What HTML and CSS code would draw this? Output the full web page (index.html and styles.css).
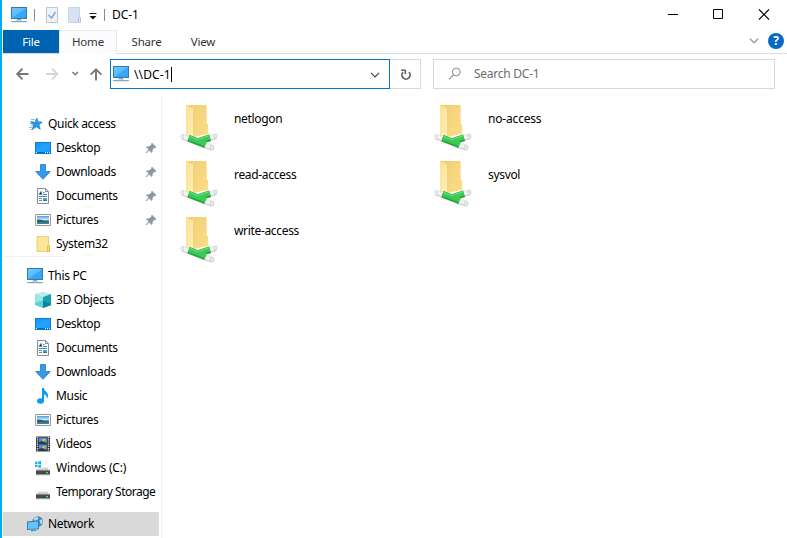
FILE: index.html
```
<!DOCTYPE html>
<html lang="en">
<head>
<meta charset="utf-8">
<title>DC-1</title>
<link rel="stylesheet" href="styles.css">
</head>
<body>
<svg class="defs" width="0" height="0" aria-hidden="true">
  <defs>
    <linearGradient id="screen" x1="0" y1="0" x2="1" y2="1"><stop offset="0" stop-color="#6fc8ff"/><stop offset=".5" stop-color="#5abaff"/><stop offset=".52" stop-color="#37a9fa"/><stop offset="1" stop-color="#2fa4f7"/></linearGradient>
    <linearGradient id="blue" x1="0" y1="0" x2="1" y2="1"><stop offset="0" stop-color="#0a93f5"/><stop offset=".5" stop-color="#22a4ff"/><stop offset="1" stop-color="#1c9bfa"/></linearGradient>
    <linearGradient id="flap" x1="0" y1="0" x2="1" y2="1"><stop offset="0" stop-color="#fbe08d"/><stop offset="1" stop-color="#ffefbc"/></linearGradient>
    <linearGradient id="back" x1="0" y1="0" x2="1" y2="1"><stop offset="0" stop-color="#f0cf72"/><stop offset="1" stop-color="#fcdd88"/></linearGradient>
    <linearGradient id="sky" x1="0" y1="0" x2="0" y2="1"><stop offset="0" stop-color="#4c9be8"/><stop offset=".5" stop-color="#d8f0fb"/><stop offset=".6" stop-color="#33605f"/><stop offset="1" stop-color="#4087b4"/></linearGradient>
    <linearGradient id="drivetop" x1="0" y1="0" x2="0" y2="1"><stop offset="0" stop-color="#ddd"/><stop offset="1" stop-color="#bbb"/></linearGradient>
  </defs>
  <symbol id="pc" viewBox="0 0 16 16"><path fill="#337ca8" d="M0 0h16v12H0z"/><path fill="url(#screen)" d="M1 1h14v10H1z"/><path fill="#8ea5b8" d="M6 12h4v1H6zM0 14h16v1H0z"/><path fill="#c6d2dc" d="M5 13h6v1H5zM1 15h14v.5H1z"/></symbol>
  <symbol id="star" viewBox="0 0 16 16"><path stroke="#7cc3f0" d="M4 3.500h4M3 5.500h4M3 7.500h4M4 9.500h4M2 11.500h4M3 13.500h3"/><path fill="#2a97e6" stroke="#1776bc" stroke-width=".7" d="M9.800 2l1.200 4 4.200.1-3.300 2.700 1.300 4.400-3.800-2.500-4 2.700 1.500-4.300-3-2.600h4.200z"/></symbol>
  <symbol id="desktop" viewBox="0 0 16 16"><path fill="#127ac9" d="M0 2h16v12H0z"/><path fill="url(#blue)" d="M1 3h14v9H1z"/><path fill="#0865ac" d="M1 12h14v1H1z"/><path fill="#fff" d="M1 12h1v1H1zM10 12h1v1h-1zM12 12h1v1h-1zM14 12h1v1h-1z"/></symbol>
  <symbol id="down" viewBox="0 0 16 16"><path fill="#3399eb" stroke="#247bc8" stroke-width=".8" d="M5.500.5h5v7h4.800L8 15.300.7 7.500h4.800z"/></symbol>
  <symbol id="doc" viewBox="0 0 16 16"><path fill="#fff" stroke="#8b8f92" d="M2.500.5h8l3 3v12h-11z"/><path fill="none" stroke="#8b8f92" d="M10.500.5v3h3"/><path stroke="#2e8cc5" d="M4 6.500l2-3 1 3M8 4.500h1.500M8 6.500h4M4 8.500h8"/><path stroke="#7d8b95" d="M4 10.500h3M4 12.500h3"/><path fill="#549bd4" d="M8 10h4v3H8z"/><path fill="#477c54" d="M8 12h4v1H8z"/></symbol>
  <symbol id="pic" viewBox="0 0 16 16"><path fill="#fff" stroke="#999" d="M.5 2.500h15v11H.5z"/><path fill="url(#sky)" d="M2 4h12v8H2z"/><path fill="#285d60" d="M2 7.500l4 .3 4 1.700H2z"/></symbol>
  <symbol id="folder" viewBox="0 0 16 16"><path fill="#ffe696" stroke="#e5bd58" stroke-width=".7" d="M2 .4h11.500V9l1 1v5.600H2z"/><path fill="#f8d97c" stroke="#d9ad42" stroke-width=".7" d="M12.500 15.500V10l1-1 1 1v5.500z"/></symbol>
  <symbol id="cube" viewBox="0 0 16 16"><path fill="#b4ecf0" d="M8 0l8 2-8 3-8-3z"/><path fill="#5fd0da" d="M0 2l8 3v11l-8-3z"/><path fill="#16a0b2" d="M16 2L8 5v11l8-3z"/><path fill="#9be6eb" d="M0 2l8 3v3L0 11z"/><path fill="#0a8598" d="M8 9l8 3v1l-8 3z"/></symbol>
  <symbol id="music" viewBox="0 0 16 16"><ellipse cx="5.500" cy="13" rx="3.500" ry="2.700" fill="#0d9bf2"/><path fill="#0d9bf2" d="M7 0h2c0 3 4 4 4 7.500 0 1.500-.5 2.500-1.200 3.500.5-3-1.300-4.500-2.800-4.800V13H7z"/></symbol>
  <symbol id="film" viewBox="0 0 16 16"><path fill="#343434" d="M1 .500h14v15H1z"/><path stroke="#e8e8e8" stroke-width="1.400" stroke-dasharray="1.200 1" d="M2.500 1v14M13.500 1v14"/><path fill="#4d8fe0" d="M4 1.500h8V8H4zM4 8.500h8V15H4z"/><path fill="#e9c22d" d="M7.500 3h3v3h-3zM7.500 10h3v3h-3z"/><path fill="#263d55" d="M4 6l3-1 5 2v1H4zM4 13l3-1 5 2v1H4z"/><path fill="#d37b24" d="M9 4.500h1.500V6H9zM9 11.500h1.500V13H9z"/></symbol>
  <symbol id="drive" viewBox="0 0 16 16"><path fill="url(#drivetop)" d="M3.500 7.500h9L15 11H1z"/><path fill="#484848" d="M1 10.500h14v4H1z"/><path fill="#8a8a8a" d="M1 14.500h14v.7H1z"/><path fill="#44f34c" d="M11 12h2v1.200h-2z"/></symbol>
  <symbol id="windrive" viewBox="0 0 16 16"><use href="#drive"/><path fill="#fff" d="M0 1h7v7.500H0z"/><path fill="#14b5ec" d="M0 2l2.500-.4V4H0zM3.300 1.500L6 1v3H3.300zM0 4.800h2.500v2.400L0 6.800zM3.300 4.800H6v3l-2.700-.4z"/></symbol>
  <symbol id="network" viewBox="0 0 16 16"><circle cx="10.700" cy="5.500" r="5.300" fill="#4686ae"/><path fill="#b4dcf0" d="M7 2l3-1.600 1.500 2-2 2-2.500.3zM12.500 4l2.500-.5.700 3-2 2z"/><path fill="#2f81b4" d="M0 5.500l12-1.200v9L0 14z"/><path fill="#64c2fd" d="M1 6.400l10-1v7L1 13z"/><path fill="#5499c4" d="M4 14l5-.5.8 1.300L4 15.500z"/></symbol>
  <symbol id="pin" viewBox="0 0 12 12"><path fill="#8a96a0" d="M7 .8l4.300 4.300-1 .8-.7-.2-2.100 2.200.1 2-1 1-2.400-2.500L1 11.500l-.6-.5 3.200-3.400L1.200 5.200l1-.9 2 .1 2.300-2.200-.3-.7z"/></symbol>
  <symbol id="share" viewBox="0 0 38 48">
    <path fill="url(#back)" d="M6 1h20.700v18l1.500 2v9L13 33z"/><path fill="url(#flap)" d="M6 1l7.500 4v24L11 33l-5-1z"/><path fill="#e9c665" d="M13.500 5v25l.6-.2V5.200z"/>
    <path stroke="#d2d5d7" stroke-width="5.600" d="M2 32.800l7 2.200M28 34.800l7.500-2.300M23.500 41.300l8 2.300"/><path stroke="#f4f5f5" stroke-width="3.600" d="M2 32.300l7 2.200M28 34.300l7.500-2.300M23.500 40.800l8 2.300"/>
    <path fill="none" stroke="#25a640" stroke-width="6.800" d="M8.500 34.300l17 6.500M17 38l13-4.300"/><path fill="none" stroke="#3dca54" stroke-width="4.800" d="M8.700 33.600l17 6.500M17 37.300l12.800-4.300"/><path fill="none" stroke="#65da77" stroke-width="1.300" d="M9.500 32.500l8.500 3 10.500-3.600"/>
    <ellipse cx="32" cy="43.600" rx="1.900" ry="2.700" fill="#e7e9ea" stroke="#c4c8ca" stroke-width=".7"/><ellipse cx="35.500" cy="32.300" rx="1.400" ry="2.500" fill="#e7e9ea" stroke="#c4c8ca" stroke-width=".7"/><ellipse cx="2.300" cy="32.800" rx="1.400" ry="2.500" fill="#eceeee" stroke="#d0d3d5" stroke-width=".7"/>
  </symbol>
</svg>
<div class="window">
  <header class="titlebar">
    <svg class="i16"><use href="#pc"/></svg>
    <span class="bar bar-first"></span>
    <svg class="props" width="12" height="16"><path d="M.5.500h11v15H.5z" fill="#edf3fb" stroke="#b8c6dc"/><path d="M2.500 8l3 3L9.500 5" fill="none" stroke="#8fa5c4" stroke-width="1.500"/></svg>
    <svg class="newfolder" width="13" height="16"><path d="M.5.500h11V10l1 1v4.500H.5z" fill="#d7e1f1" stroke="#c8d3e5"/><path d="M10.500 15v-4l1-1 1 1v4" fill="#dfe7f4" stroke="#b5c3da"/></svg>
    <svg class="custom" width="8" height="8"><path d="M.5 1.500h7" stroke="#222"/><path d="M.5 4h7L4 7.500z" fill="#111"/></svg>
    <span class="bar"></span>
    <span class="title">DC-1</span>
    <svg class="controls" width="104" height="12"><path d="M0 6.500h10" stroke="#000"/><path d="M45.500 1.500h9v9h-9z" fill="none" stroke="#000"/><path d="M91 1.500l10 10M101 1.500l-10 10" stroke="#000" stroke-width="1.100"/></svg>
  </header>
  <nav class="tabs">
    <span class="tab file">File</span><span class="tab home">Home</span><span class="tab sharetab">Share</span><span class="tab view">View</span>
    <svg class="expand" width="10" height="6"><path d="M1 .8l4 4 4-4" fill="none" stroke="#999" stroke-width="1.300"/></svg>
    <span class="help">?</span>
  </nav>
  <div class="address">
    <svg class="arrows" width="90" height="16"><path d="M2 8h11.500M7.500 2.700L2.200 8l5.300 5.300" fill="none" stroke="#777" stroke-width="1.900"/><path d="M31 8h11M37 2.700L42.300 8 37 13.300" fill="none" stroke="#d6d6d6" stroke-width="1.900"/><path d="M57.500 6l2.700 2.700L63 6" fill="none" stroke="#777" stroke-width="1.500"/><path d="M81 14.500V3.500M75.700 8.700L81 3.400l5.300 5.300" fill="none" stroke="#777" stroke-width="1.900"/></svg>
    <div class="path"><svg class="i16"><use href="#pc"/></svg><span class="pathtext">\\DC-1</span><span class="caret"></span><svg class="drop" width="10" height="6"><path d="M1 .8l4 4 4-4" fill="none" stroke="#444" stroke-width="1.200"/></svg></div>
    <div class="refresh"><svg width="12" height="12"><path d="M3 3.200A4.100 4.100 0 1 0 9 3.200" fill="none" stroke="#666" stroke-width="1.800"/><path d="M1 1.300h4.300v4" fill="none" stroke="#666" stroke-width="1.600"/></svg></div>
    <div class="search"><svg width="14" height="14"><circle cx="8.300" cy="5" r="3.900" fill="none" stroke="#888"/><path d="M5.500 7.800L1 12.300" stroke="#888" stroke-width="1.100"/></svg><span>Search DC-1</span></div>
  </div>
  <div class="body">
    <aside class="side">
      <div class="row top"><svg class="i16"><use href="#star"/></svg><span>Quick access</span></div>
      <div class="row"><svg class="i16"><use href="#desktop"/></svg><span>Desktop</span><svg class="pin"><use href="#pin"/></svg></div>
      <div class="row"><svg class="i16"><use href="#down"/></svg><span>Downloads</span><svg class="pin"><use href="#pin"/></svg></div>
      <div class="row"><svg class="i16"><use href="#doc"/></svg><span>Documents</span><svg class="pin"><use href="#pin"/></svg></div>
      <div class="row"><svg class="i16"><use href="#pic"/></svg><span>Pictures</span><svg class="pin"><use href="#pin"/></svg></div>
      <div class="row"><svg class="i16"><use href="#folder"/></svg><span>System32</span></div>
      <div class="split"></div>
      <div class="row top"><svg class="i16"><use href="#pc"/></svg><span>This PC</span></div>
      <div class="row"><svg class="i16"><use href="#cube"/></svg><span>3D Objects</span></div>
      <div class="row"><svg class="i16"><use href="#desktop"/></svg><span>Desktop</span></div>
      <div class="row"><svg class="i16"><use href="#doc"/></svg><span>Documents</span></div>
      <div class="row"><svg class="i16"><use href="#down"/></svg><span>Downloads</span></div>
      <div class="row"><svg class="i16"><use href="#music"/></svg><span>Music</span></div>
      <div class="row"><svg class="i16"><use href="#pic"/></svg><span>Pictures</span></div>
      <div class="row"><svg class="i16"><use href="#film"/></svg><span>Videos</span></div>
      <div class="row"><svg class="i16"><use href="#windrive"/></svg><span class="loose">Windows (C:)</span></div>
      <div class="row"><svg class="i16"><use href="#drive"/></svg><span class="tight">Temporary Storage</span></div>
      <div class="row top selected"><svg class="i16"><use href="#network"/></svg><span>Network</span></div>
    </aside>
    <main class="files">
      <div class="item"><svg><use href="#share"/></svg><span>netlogon</span></div>
      <div class="item"><svg><use href="#share"/></svg><span class="loose">no-access</span></div>
      <div class="item"><svg><use href="#share"/></svg><span>read-access</span></div>
      <div class="item"><svg><use href="#share"/></svg><span>sysvol</span></div>
      <div class="item"><svg><use href="#share"/></svg><span>write-access</span></div>
    </main>
  </div>
</div>
</body>
</html>
```
FILE: styles.css
```
* { box-sizing: border-box; }
body { margin: 0; background: #fff; color: #000; font: 12px/16px "Noto Sans", "Open Sans", sans-serif; letter-spacing: -0.33px; overflow: hidden; }
svg { display: block; flex: none; }
.defs { position: absolute; }
.i16 { width: 16px; height: 16px; }
.window { width: 787px; height: 538px; border-left: 2px solid #00adef; display: flex; flex-direction: column; overflow: hidden; }
.titlebar { height: 30px; display: flex; align-items: center; padding-left: 9px; }
.bar { width: 1px; height: 12px; background: #8c8c8c; }
.bar-first { margin-left: 7px; }
.props { margin-left: 11px; }
.newfolder { margin-left: 10px; }
.custom { margin: 2px 7px 0 8px; }
.title { margin-left: 7px; letter-spacing: -0.1px; }
.controls { margin: -2px 15px 0 auto; }
.tabs { height: 24px; display: flex; border-bottom: 1px solid #dadbdc; padding-left: 1px; }
.tab { height: 23px; line-height: 24px; text-align: center; color: #333; font-size: 11.5px; letter-spacing: -0.2px; }
.tab.file { width: 56px; background: #0063b1; color: #fff; }
.home { width: 58px; height: 24px; background: #fcfcfe; border: 1px solid #e9e9ec; border-bottom: 0; line-height: 22px; }
.sharetab { width: 59px; }
.view { width: 54px; }
.expand { margin: 8px 9px 0 auto; }
.help { width: 16px; height: 16px; margin: 3px 3px 0 0; border-radius: 50%; background: #0869c4; color: #fff; font-weight: 700; text-align: center; line-height: 16px; }
.address { height: 42px; padding: 5px 12px 7px 0; display: flex; }
.arrows { width: 90px; margin: 7px 5px 0 13px; }
.path { width: 280px; height: 30px; border: 1px solid #0078d7; display: flex; align-items: center; padding-left: 2px; }
.pathtext { margin-left: 5px; padding-top: 1px; letter-spacing: 0.1px; }
.caret { width: 1px; height: 15px; background: #000; }
.drop { margin: 2px 9px 0 auto; }
.refresh { width: 31px; height: 30px; border: 1px solid #d9d9d9; border-left: 0; display: flex; align-items: center; justify-content: center; padding: 2px 0 0 1px; }
.search { flex: 1; height: 30px; margin-left: 12px; border: 1px solid #d9d9d9; display: flex; align-items: center; padding-left: 14px; gap: 12px; color: #6d6d6d; letter-spacing: -0.25px; }
.body { flex: 1; display: flex; }
.side { width: 160px; border-right: 1px solid #f0f0f0; padding: 16px 2px 0 1px; }
.row { height: 24px; display: flex; align-items: center; padding-left: 32px; white-space: nowrap; gap: 5px; }
.row .tight { letter-spacing: -0.5px; }
.loose { letter-spacing: -0.18px; }
.row.top { padding-left: 24px; }
.pin { width: 12px; height: 12px; margin-left: auto; margin-right: 2px; }
.split { height: 8px; border-top: 1px solid #f2f2f2; margin-right: 94px; }
.selected { background: #d9d9d9; margin-top: 8px; }
.files { display: grid; grid-template-columns: 254px 254px; grid-auto-rows: 56px; padding: 8px 0 0 18px; align-content: start; }
.item { display: flex; gap: 16px; }
.item svg { width: 38px; height: 48px; }
.item span { margin-top: 7px; }
```
